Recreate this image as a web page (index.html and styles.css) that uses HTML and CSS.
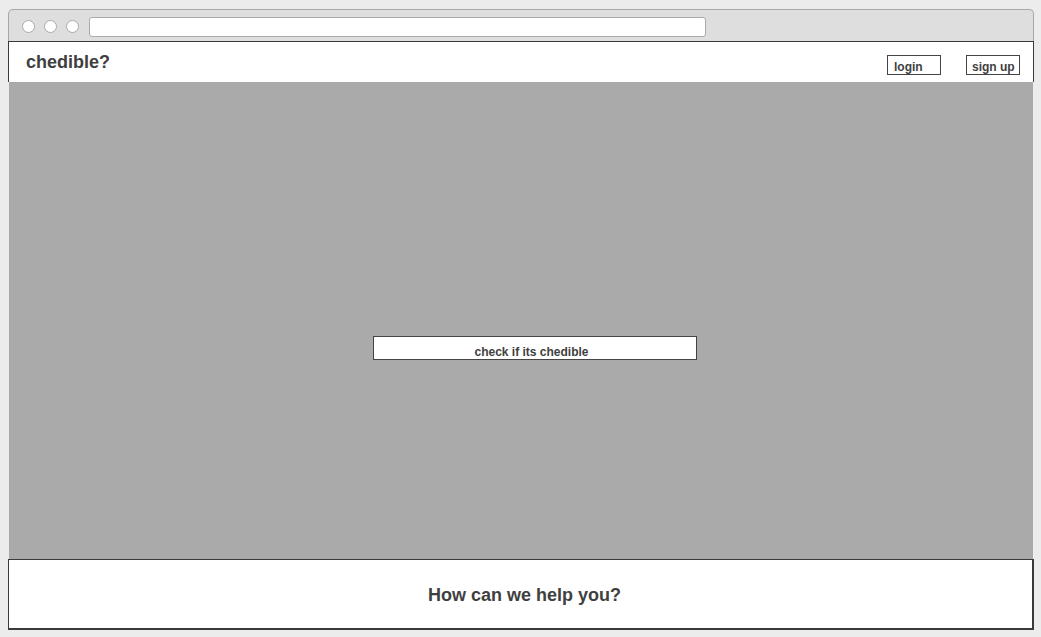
FILE: index.html
```html
<!DOCTYPE html>
<html>
<head>
<meta charset="utf-8">
<link rel="stylesheet" href="styles.css">
</head>
<body>
<div class="window">
  <div class="titlebar">
    <span class="dot"></span><span class="dot"></span><span class="dot"></span>
    <div class="address"></div>
  </div>
  <div class="header">
    <div class="logo">chedible?</div>
    <div class="nav">
      <div class="navbtn">login</div>
      <div class="navbtn">sign up</div>
    </div>
  </div>
  <div class="hero">
    <div class="check">check if its chedible</div>
  </div>
  <div class="footer">How can we help you?</div>
</div>
</body>
</html>
```
FILE: styles.css
```css
html, body {
  margin: 0;
  padding: 0;
  background: #ececec;
  font-family: "Liberation Sans", Arial, sans-serif;
  color: #3f3f3f;
}
.window {
  margin: 9px 0 0 8px;
  width: 1026px;
}
.titlebar {
  height: 32px;
  box-sizing: border-box;
  background: #dedede;
  border: 1px solid #a8a8a8;
  border-bottom: none;
  border-radius: 5px 5px 0 0;
  display: flex;
  align-items: flex-start;
  padding: 7px 0 0 13px;
  gap: 9px;
}
.dot {
  width: 13px;
  height: 13px;
  box-sizing: border-box;
  border: 1px solid #aaaaaa;
  border-radius: 50%;
  background: #fff;
  margin-top: 3px;
}
.address {
  margin-left: 1px;
  width: 617px;
  height: 20px;
  box-sizing: border-box;
  background: #fff;
  border: 1px solid #aaaaaa;
  border-radius: 3px;
}
.header {
  height: 41px;
  box-sizing: border-box;
  background: #fff;
  border: 1px solid #3a3a3a;
  border-bottom: none;
  display: flex;
  justify-content: space-between;
  align-items: flex-start;
}
.logo {
  font-weight: bold;
  font-size: 18px;
  margin: 10px 0 0 17px;
}
.nav {
  display: flex;
  gap: 25px;
  margin: 13px 13px 0 0;
}
.navbtn {
  width: 54px;
  height: 20px;
  box-sizing: border-box;
  border: 1px solid #444;
  font-weight: bold;
  font-size: 12px;
  line-height: 12px;
  padding: 5px 0 0 6px;
}
.navbtn + .navbtn {
  padding-left: 5px;
}
.hero {
  height: 477px;
  box-sizing: border-box;
  background: #aaaaaa;
  margin: 0 1px 0 1px;
  padding: 254px 0 0 364px;
}
.check {
  width: 324px;
  height: 24px;
  box-sizing: border-box;
  background: #fff;
  border: 1px solid #444;
  font-weight: bold;
  font-size: 12px;
  line-height: 12px;
  text-align: center;
  padding: 9px 7px 0 0;
}
.footer {
  height: 71px;
  width: 1026px;
  box-sizing: border-box;
  background: #fff;
  border: 1px solid #3a3a3a;
  border-width: 1px 2px 2px 1px;
  font-weight: bold;
  font-size: 18px;
  line-height: 18px;
  text-align: center;
  padding: 26px 0 0 8px;
}
```
